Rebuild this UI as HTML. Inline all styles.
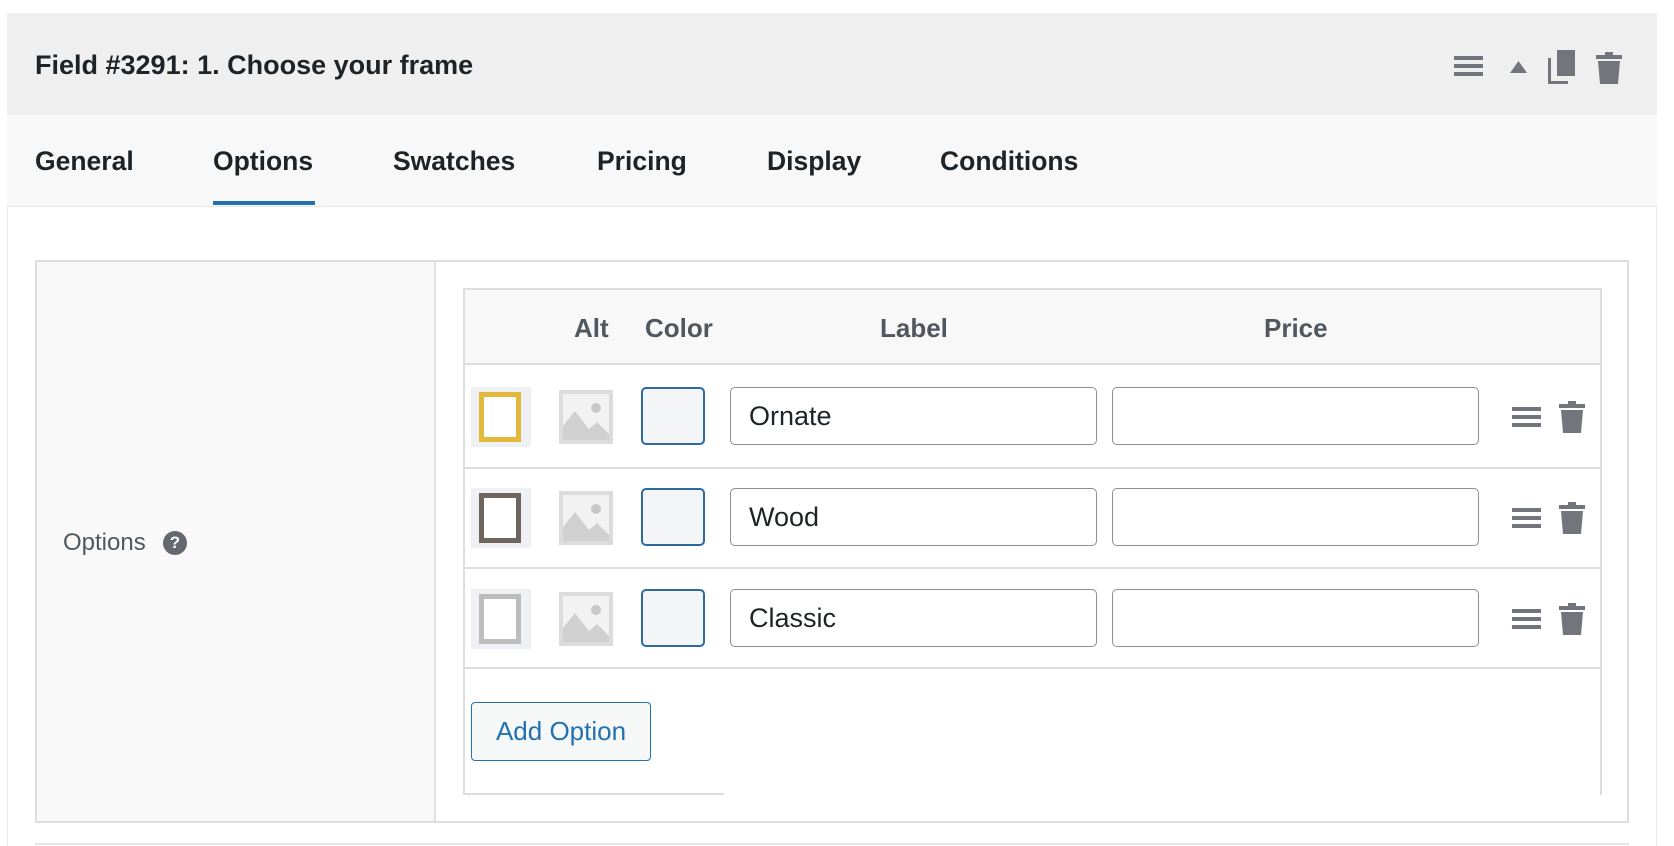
<!DOCTYPE html>
<html><head><style>
*{margin:0;padding:0;box-sizing:border-box}
body{width:1674px;height:846px;background:#fff;position:relative;overflow:hidden;font-family:"Liberation Sans",sans-serif}
.a{position:absolute}
.hdr{left:7px;top:13px;width:1650px;height:102px;background:#efefef}
.title{left:35px;top:50px;font-size:27px;font-weight:bold;color:#1d2327}
.tabs{left:7px;top:115px;width:1650px;height:92px;background:#f8f8f8;border-bottom:1px solid #e5e5e5}
.tab{top:146px;font-size:26.5px;font-weight:bold;color:#1d2327}
.side{left:7px;top:207px;width:1650px;height:639px;border-left:1px solid #e8e8e8;border-right:1px solid #e8e8e8}
.box{left:35px;top:260px;width:1594px;height:563px;border:2px solid #dedede}
.left{left:37px;top:262px;width:399px;height:559px;background:#f9f9f9;border-right:2px solid #e2e2e2}
.tbl{left:463px;top:288px;width:1139px;height:507px;border-left:2px solid #ddd;border-right:2px solid #ddd;border-top:2px solid #ddd}
.th{left:465px;top:290px;width:1135px;height:75px;background:#f8f8f8;border-bottom:2px solid #ddd}
.hc{top:313px;font-size:26px;font-weight:bold;color:#50575e}
.row{left:465px;width:1135px;height:102px;border-bottom:2px solid #ddd}
.inp{height:58px;border:1.5px solid #8c8f94;border-radius:5px;background:#fff;font-size:27px;color:#1d2327;padding:13px 18px}
.sw{width:64px;height:58px;border:2px solid #2c6aa0;border-radius:5px;background:#f3f5f6}
.thumb{width:60px;height:60px;background:#eef0f3}
.btn{left:471px;top:702px;width:180px;height:59px;border:1.5px solid #2271b1;border-radius:4px;background:#f6f7f7;color:#2271b1;font-size:26px;text-align:center;line-height:56px}
</style></head><body>
<div class="a hdr"></div>
<div class="a title">Field #3291: 1. Choose your frame</div>
<svg class="a" style="left:1450px;top:48px" width="180" height="40" viewBox="1450 48 180 40">
<rect x="1454" y="56" width="29" height="4" fill="#72757c"/><rect x="1454" y="64" width="29" height="4" fill="#72757c"/><rect x="1454" y="72" width="29" height="4" fill="#72757c"/>
<polygon points="1510,73 1527,73 1518.5,61" fill="#72757c"/>
<rect x="1557" y="50" width="18" height="26" fill="#72757c"/><path d="M1548 58v26h20v-3h-17v-23z" fill="#72757c"/>
<path d="M1605 55v-3h8v3h9v4h-26v-4z" fill="#72757c"/><path d="M1598 61h22l-2 23h-18z" fill="#72757c"/>
</svg>
<div class="a tabs"></div>
<div class="a tab" style="left:35px">General</div>
<div class="a tab" style="left:213px">Options</div>
<div class="a tab" style="left:393px">Swatches</div>
<div class="a tab" style="left:597px">Pricing</div>
<div class="a tab" style="left:767px">Display</div>
<div class="a tab" style="left:940px">Conditions</div>
<div class="a" style="left:213px;top:201px;width:102px;height:4px;background:#2271b1"></div>
<div class="a side"></div>
<div class="a box"></div>
<div class="a left"></div>
<div class="a" style="left:63px;top:529px;font-size:24px;color:#50575e">Options</div>
<div class="a" style="left:163px;top:531px;width:24px;height:24px;border-radius:50%;background:#646970;color:#fff;font-size:17px;font-weight:bold;text-align:center;line-height:24px">?</div>
<div class="a tbl"></div>
<div class="a th"></div>
<div class="a hc" style="left:574px">Alt</div>
<div class="a hc" style="left:645px">Color</div>
<div class="a hc" style="left:880px">Label</div>
<div class="a hc" style="left:1264px">Price</div>

<div class="a row" style="top:367px"></div>
<div class="a row" style="top:467px"></div>
<div class="a row" style="top:567px"></div>

<div class="a thumb" style="left:471px;top:387px"><div style="position:absolute;left:8px;top:5px;width:42px;height:50px;border:5px solid #e2b93b;background:#fff"></div></div>
<div class="a thumb" style="left:471px;top:488px"><div style="position:absolute;left:8px;top:5px;width:42px;height:50px;border:5px solid #6d655e;background:#fff"></div></div>
<div class="a thumb" style="left:471px;top:589px"><div style="position:absolute;left:8px;top:5px;width:42px;height:50px;border:5px solid #bdbdbd;background:#fff"></div></div>

<svg class="a" style="left:558px;top:389px" width="56" height="56" viewBox="0 0 56 56"><rect x="1" y="1" width="54" height="54" fill="#dcdcdc"/><rect x="5" y="5" width="46" height="46" fill="#f2f2f2"/><circle cx="38" cy="19" r="5" fill="#c8c8c8"/><path d="M5 37l12-15 14 18 8-7 12 12v6H5z" fill="#d0d0d0"/></svg>
<svg class="a" style="left:558px;top:490px" width="56" height="56" viewBox="0 0 56 56"><rect x="1" y="1" width="54" height="54" fill="#dcdcdc"/><rect x="5" y="5" width="46" height="46" fill="#f2f2f2"/><circle cx="38" cy="19" r="5" fill="#c8c8c8"/><path d="M5 37l12-15 14 18 8-7 12 12v6H5z" fill="#d0d0d0"/></svg>
<svg class="a" style="left:558px;top:591px" width="56" height="56" viewBox="0 0 56 56"><rect x="1" y="1" width="54" height="54" fill="#dcdcdc"/><rect x="5" y="5" width="46" height="46" fill="#f2f2f2"/><circle cx="38" cy="19" r="5" fill="#c8c8c8"/><path d="M5 37l12-15 14 18 8-7 12 12v6H5z" fill="#d0d0d0"/></svg>

<div class="a sw" style="left:641px;top:387px"></div>
<div class="a sw" style="left:641px;top:488px"></div>
<div class="a sw" style="left:641px;top:589px"></div>

<div class="a inp" style="left:730px;top:387px;width:367px">Ornate</div>
<div class="a inp" style="left:730px;top:488px;width:367px">Wood</div>
<div class="a inp" style="left:730px;top:589px;width:367px">Classic</div>
<div class="a inp" style="left:1112px;top:387px;width:367px"></div>
<div class="a inp" style="left:1112px;top:488px;width:367px"></div>
<div class="a inp" style="left:1112px;top:589px;width:367px"></div>

<svg class="a" style="left:1505px;top:395px" width="90" height="240" viewBox="0 0 90 240">
<g fill="#72757c">
<g><rect x="7" y="12" width="29" height="4"/><rect x="7" y="20" width="29" height="4"/><rect x="7" y="28" width="29" height="4"/>
<path d="M63 9v-3h8v3h9v4h-26v-4z"/><path d="M56 15h22l-2 23h-18z"/></g>
<g transform="translate(0,101)"><rect x="7" y="12" width="29" height="4"/><rect x="7" y="20" width="29" height="4"/><rect x="7" y="28" width="29" height="4"/>
<path d="M63 9v-3h8v3h9v4h-26v-4z"/><path d="M56 15h22l-2 23h-18z"/></g>
<g transform="translate(0,202)"><rect x="7" y="12" width="29" height="4"/><rect x="7" y="20" width="29" height="4"/><rect x="7" y="28" width="29" height="4"/>
<path d="M63 9v-3h8v3h9v4h-26v-4z"/><path d="M56 15h22l-2 23h-18z"/></g>
</g></svg>

<div class="a btn">Add Option</div>
<div class="a" style="left:463px;top:793px;width:261px;height:2px;background:#ddd"></div>
<div class="a" style="left:35px;top:843px;width:1594px;height:2px;background:#e5e5e5"></div>
</body></html>
